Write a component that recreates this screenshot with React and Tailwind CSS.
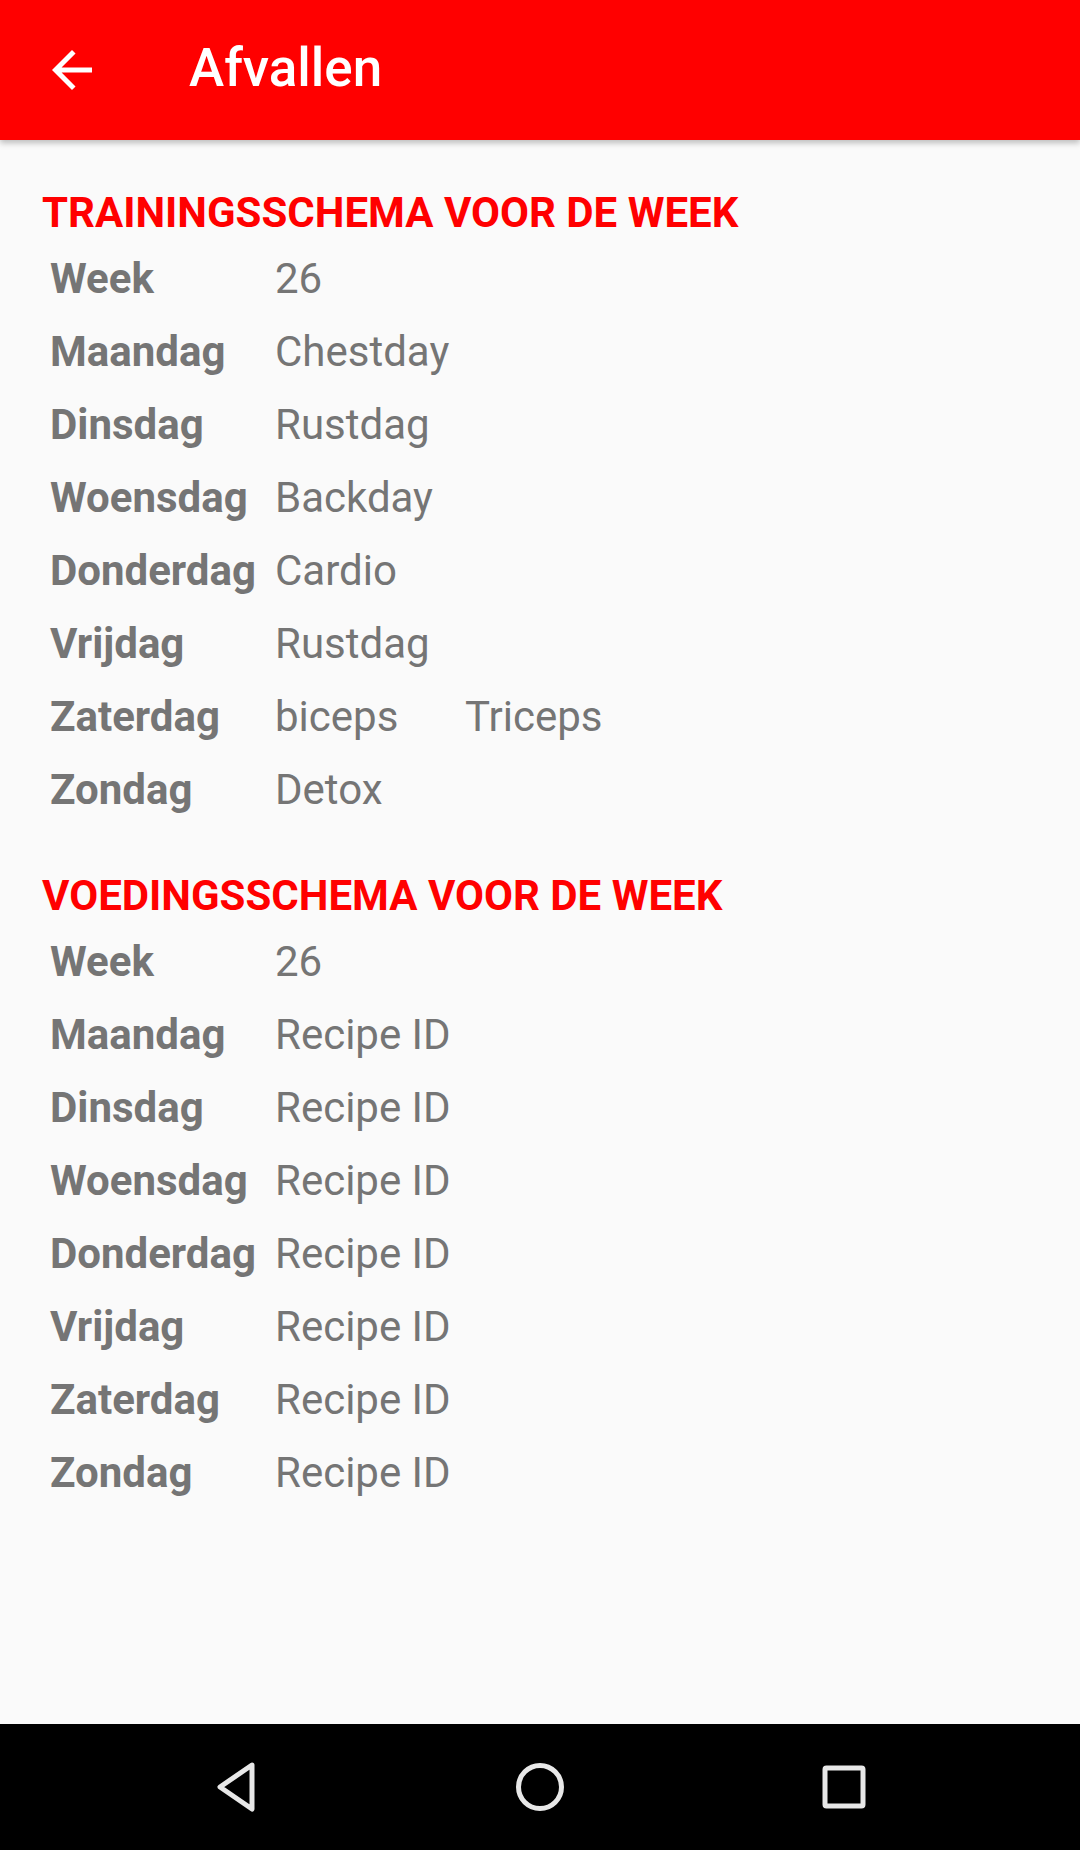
import React from "react";

const training = [
  ["Week", "26"],
  ["Maandag", "Chestday"],
  ["Dinsdag", "Rustdag"],
  ["Woensdag", "Backday"],
  ["Donderdag", "Cardio"],
  ["Vrijdag", "Rustdag"],
  ["Zaterdag", "biceps", "Triceps"],
  ["Zondag", "Detox"],
];

const days = ["Maandag", "Dinsdag", "Woensdag", "Donderdag", "Vrijdag", "Zaterdag", "Zondag"];
const food = [["Week", "26"], ...days.map((d) => [d, "Recipe ID"])];

const Schedule = ({ title, rows, className }) => (
  <section className={className}>
    <h2 className="pl-[42px] text-[42px] leading-[52px] font-bold text-[#ff0000]">{title}</h2>
    <div className="mt-[3px] pl-[50px]">
      {rows.map(([label, value, extra]) => (
        <div key={label} className="flex h-[73px] items-center text-[42px] leading-[52px] text-[#757575]">
          <span className="w-[225px] font-bold">{label}</span>
          <span className="w-[190px]">{value}</span>
          {extra && <span>{extra}</span>}
        </div>
      ))}
    </div>
  </section>
);

export default function App() {
  return (
    <div className="flex h-[1850px] w-[1080px] flex-col bg-[#fafafa] font-['Roboto',sans-serif]">
      <header className="relative z-10 flex h-[140px] shrink-0 items-center bg-[#ff0000] shadow-[0_3px_6px_rgba(0,0,0,0.25)]">
        <svg viewBox="0 0 24 24" className="ml-[42px] h-[60px] w-[60px] fill-white">
          <path d="M20 11H7.83l5.59-5.59L12 4l-8 8 8 8 1.41-1.41L7.83 13H20v-2z" />
        </svg>
        <h1 className="ml-[87px] -mt-[2px] text-[53px] font-medium text-white">Afvallen</h1>
      </header>

      <main className="flex-1">
        <Schedule title="TRAININGSSCHEMA VOOR DE WEEK" rows={training} className="mt-[47px]" />
        <Schedule title="VOEDINGSSCHEMA VOOR DE WEEK" rows={food} className="mt-[44px]" />
      </main>

      <nav className="flex h-[126px] shrink-0 items-center justify-center gap-[204px] bg-black">
        <div className="flex w-[100px] justify-center">
          <svg viewBox="0 0 44 52" className="h-[52px] w-[44px]" fill="none" stroke="#e8e8e8" strokeWidth="5" strokeLinejoin="round">
            <path d="M38 4 L6 26 L38 48 Z" />
          </svg>
        </div>
        <div className="flex w-[100px] justify-center">
          <svg viewBox="0 0 52 52" className="h-[52px] w-[52px]" fill="none" stroke="#e8e8e8" strokeWidth="5">
            <circle cx="26" cy="26" r="21.5" />
          </svg>
        </div>
        <div className="flex w-[100px] justify-center">
          <svg viewBox="0 0 46 46" className="h-[46px] w-[46px]" fill="none" stroke="#e8e8e8" strokeWidth="5" strokeLinejoin="round">
            <rect x="4" y="4" width="38" height="38" rx="1.5" />
          </svg>
        </div>
      </nav>
    </div>
  );
}
